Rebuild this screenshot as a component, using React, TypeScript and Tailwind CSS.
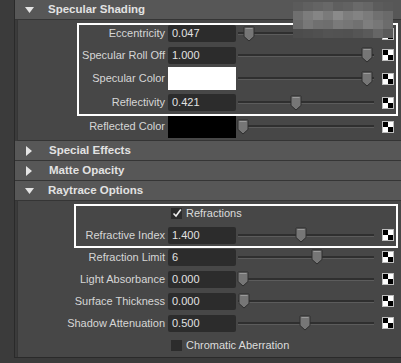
import React from "react";

type RowProps = {
    label: string;
    value?: string;
    color?: string;
    handle?: number;
    h: string;
};

const Handle = () => (
    <svg width="12" height="16" viewBox="0 0 12 16" className="block">
        <path d="M1.5 1 H10.5 Q11 1 11 1.5 V10.5 L6 15 L1 10.5 V1.5 Q1 1 1.5 1 Z" fill="#767676" stroke="#2e2e2e" strokeWidth="1" />
        <path d="M2.5 2.5 H9.5" stroke="#9a9a9a" strokeWidth="1" />
    </svg>
);

const Checker = () => (
    <div className="w-[12px] h-[12px] border border-[#bdbdbd] grid grid-cols-2 grid-rows-2 shrink-0">
        <div className="bg-black" />
        <div className="bg-white" />
        <div className="bg-white" />
        <div className="bg-black" />
    </div>
);

const Slider = ({ pos }: { pos: number }) => (
    <div className="relative w-[136px] h-[16px] ml-[2px] shrink-0 flex items-center">
        <div className="w-full h-[3px] bg-[#2f2f2f] border-b border-[#5c5c5c]" />
        <div className="absolute top-0" style={{ left: pos - 6 }}>
            <Handle />
        </div>
    </div>
);

const Row = ({ label, value, color, handle = 0, h }: RowProps) => (
    <div className={`flex items-center ${h}`}>
        <div className="w-[147px] text-right text-[#d6d6d6] shrink-0">{label}</div>
        {color ? (
            <div className="ml-[3px] w-[68px] self-stretch shrink-0" style={{ background: color }} />
        ) : (
            <div className="ml-[3px] w-[68px] h-[17px] bg-[#2c2c2c] rounded-[2px] text-[#e2e2e2] pl-[4px] leading-[17px] shrink-0">
                {value}
            </div>
        )}
        <Slider pos={handle} />
        <div className="ml-[8px]">
            <Checker />
        </div>
    </div>
);

const CheckRow = ({ label, checked }: { label: string; checked: boolean }) => (
    <div className="flex items-center h-[22px]">
        <div className="w-[147px] shrink-0" />
        <div className="ml-[6px] w-[11px] h-[11px] bg-[#2c2c2c] flex items-center justify-center">
            {checked && (
                <svg width="10" height="10" viewBox="0 0 10 10">
                    <path d="M1.5 5.5 L4 8 L8.8 1.5" fill="none" stroke="#f0f0f0" strokeWidth="1.6" />
                </svg>
            )}
        </div>
        <span className="ml-[4px] text-[#dcdcdc]">{label}</span>
    </div>
);

const Header = ({ title, open }: { title: string; open: boolean }) => (
    <div className="h-[20px] bg-[#575757] border-b border-[#353535] flex items-center shrink-0">
        {open ? (
            <svg width="9" height="6" viewBox="0 0 9 6" className="ml-[10px] shrink-0">
                <path d="M0 0 H9 L4.5 6 Z" fill="#e4e4e4" />
            </svg>
        ) : (
            <svg width="6" height="10" viewBox="0 0 6 10" className="ml-[11px] mr-[3px] shrink-0">
                <path d="M0 0 V10 L6 5 Z" fill="#e4e4e4" />
            </svg>
        )}
        <span className="ml-[14px] font-bold text-[11.5px] text-[#e2e2e2]">{title}</span>
    </div>
);

const blur = [
    ["#5b5b5b", "#606060", "#646464", "#686868", "#5f5f5f", "#626262", "#6a6a6a", "#666666", "#5c5c5c", "#595959"],
    ["#6f6f6f", "#7c7c7c", "#858585", "#7a7a7a", "#8a8a8a", "#7d7d7d", "#838383", "#7b7b7b", "#707070", "#6a6a6a"],
    ["#6a6a6a", "#787878", "#707070", "#6e6e6e", "#7a7a7a", "#767676", "#717171", "#7e7e7e", "#777777", "#6c6c6c"],
    ["#4c4c4c", "#4e4e4e", "#505050", "#535353", "#525252", "#515151", "#555555", "#5a5a5a", "#666666", "#5a5a5a"],
];

export default function App() {
    return (
        <div className="relative w-[401px] h-[363px] bg-[#3b3b3b] flex overflow-hidden text-[11px] font-['Liberation_Sans',Arial,sans-serif]">
            <div className="w-[14px] shrink-0" />
            <div className="flex-1 flex flex-col border-l border-[#2a2a2a] h-[358px] border-b">
                <Header title="Specular Shading" open />
                <div className="bg-[#474747] ml-[2px] border-l border-[#363636] pt-[3px] pb-[1px] border-b border-b-[#343434]">
                    <Row label="Eccentricity" value="0.047" handle={11} h="h-[21px]" />
                    <Row label="Specular Roll Off" value="1.000" handle={129} h="h-[22px]" />
                    <Row label="Specular Color" color="#ffffff" handle={129} h="h-[25px] py-[1px]" />
                    <Row label="Reflectivity" value="0.421" handle={58} h="h-[23px]" />
                    <Row label="Reflected Color" color="#000000" handle={5} h="h-[25px] py-[1px]" />
                </div>
                <Header title="Special Effects" open={false} />
                <Header title="Matte Opacity" open={false} />
                <Header title="Raytrace Options" open />
                <div className="flex-1 bg-[#474747] ml-[2px] border-l border-[#363636] pt-[1px]">
                    <CheckRow label="Refractions" checked />
                    <Row label="Refractive Index" value="1.400" handle={63} h="h-[22px]" />
                    <Row label="Refraction Limit" value="6" handle={79} h="h-[22px]" />
                    <Row label="Light Absorbance" value="0.000" handle={5} h="h-[22px]" />
                    <Row label="Surface Thickness" value="0.000" handle={6} h="h-[22px]" />
                    <Row label="Shadow Attenuation" value="0.500" handle={67} h="h-[22px]" />
                    <CheckRow label="Chromatic Aberration" checked={false} />
                </div>
            </div>

            {/* annotation boxes */}
            <div className="absolute left-[77px] top-[23px] w-[321px] h-[93px] border-2 border-white pointer-events-none" />
            <div className="absolute left-[74px] top-[204px] w-[324px] h-[44px] border-2 border-white pointer-events-none" />

            {/* pixelated watermark */}
            <div className="absolute left-[293px] top-[2px] flex flex-col">
                {blur.map((r, i) => (
                    <div key={i} className="flex">
                        {r.map((c, j) => (
                            <div key={j} className="w-[10px] h-[9px]" style={{ background: c }} />
                        ))}
                    </div>
                ))}
            </div>
        </div>
    );
}
